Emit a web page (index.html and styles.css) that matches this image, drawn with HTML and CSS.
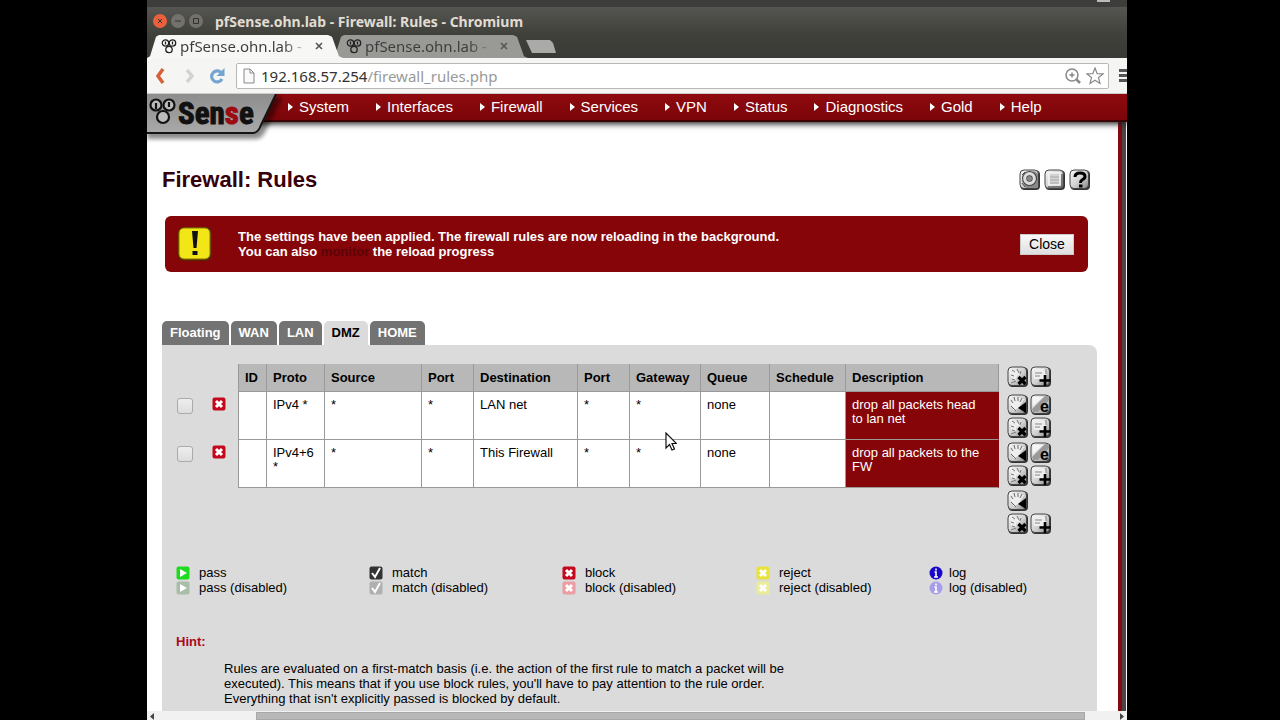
FILE: index.html
```
<!DOCTYPE html>
<html lang="en">
<head>
  <meta charset="UTF-8">
  <meta name="viewport" content="width=device-width, initial-scale=1.0">
  <title>pfSense.ohn.lab - Firewall: Rules</title>
  <link rel="stylesheet" href="styles.css">
</head>
<body>
<!-- Shared icons -->
<svg width="0" height="0" class="defs">
  <defs>
    <linearGradient id="metal" x1="0" y1="0" x2="1" y2="1">
      <stop offset="0" stop-color="#fafafa" />
      <stop offset="0.55" stop-color="#cfcfcf" />
      <stop offset="1" stop-color="#858585" />
    </linearGradient>
    <linearGradient id="logoFill" x1="0" y1="0" x2="0" y2="1">
      <stop offset="0" stop-color="#8d8d8d" />
      <stop offset="1" stop-color="#a9a9a9" />
    </linearGradient>
    <symbol id="base" viewBox="0 0 22 22">
      <rect x="1.5" y="1.5" width="19.500" height="19.500" rx="4" fill="#333" />
      <rect x="1" y="1" width="18.500" height="18.500" rx="4" fill="url(#metal)" stroke="#444" />
    </symbol>
    <symbol id="delete" viewBox="0 0 22 22">
      <use href="#base" />
      <path d="M3 5l5-1 6 3-4 3-2 5-4-3z" fill="#eee" />
      <path d="M5 4l3 2M10 3l2 4M14 5l-1 3M4 9l3 1M5 13l3 1M4 17l5-2" stroke="#777" fill="none" />
      <path d="M11.500 11l7 7M18.500 11l-7 7" stroke="#000" stroke-width="3.200" />
    </symbol>
    <symbol id="add" viewBox="0 0 22 22">
      <use href="#base" />
      <path d="M4 3h10l2 4v6H4z" fill="#eee" />
      <path d="M5 7h7M5 10h5M16 3v5" stroke="#888" fill="none" />
      <path d="M15 9v11M9.500 14.500h11" stroke="#000" stroke-width="2.600" />
    </symbol>
    <symbol id="move" viewBox="0 0 22 22">
      <use href="#base" />
      <path d="M3 8l4 9 5-4 5-8-8-2z" fill="#eee" />
      <path d="M4 6l2 3M7 3l1 4M11 3v4M15 4l-2 4M4 12l5 5" stroke="#666" fill="none" />
      <path d="M11 14l8-6v11z" fill="#000" />
    </symbol>
    <symbol id="edit" viewBox="0 0 22 22">
      <use href="#base" />
      <path d="M2 15L15 2h4v4L8 18H3z" fill="#999" />
      <path d="M3 3h10L3 12z" fill="#f5f5f5" />
      <text x="10" y="18" class="edit-letter">e</text>
    </symbol>
    <symbol id="block" viewBox="0 0 14 14">
      <rect x="0.500" y="0.500" width="13" height="13" rx="2" fill="currentColor" />
      <path d="M4 4l6 6M10 4l-6 6" stroke="#fff" stroke-width="3" />
    </symbol>
    <symbol id="pass" viewBox="0 0 14 14">
      <rect x="0.500" y="0.500" width="13" height="13" rx="2" fill="currentColor" />
      <path d="M4 3l7 4-7 4z" fill="#fff" />
    </symbol>
    <symbol id="match" viewBox="0 0 14 14">
      <rect x="0.500" y="0.500" width="13" height="13" rx="2" fill="currentColor" />
      <path d="M3 7l3 4 5-9" stroke="#fff" stroke-width="2" fill="none" />
    </symbol>
    <symbol id="log" viewBox="0 0 14 14">
      <circle cx="7" cy="7" r="6.500" fill="currentColor" />
      <path d="M7 2.500v2M5.500 6H7v5M5 11h4" stroke="#fff" stroke-width="1.600" fill="none" />
    </symbol>
    <symbol id="rings" viewBox="0 0 16 16">
      <circle cx="4.500" cy="5" r="3.200" />
      <circle cx="11.500" cy="5" r="3.200" />
      <circle cx="8" cy="11.500" r="3.200" />
      <path d="M4.500 3.500v3M11.500 3.500v3" />
    </symbol>
  </defs>
</svg>

<div class="desktop">
  <div class="panel-strip"></div>
  <header class="titlebar">
    <button class="win-btn win-close" aria-label="Close window"><svg viewBox="0 0 14 14"><path d="M5 5l4 4M9 5l-4 4" /></svg></button>
    <button class="win-btn" aria-label="Minimize"><svg viewBox="0 0 14 14"><path d="M4 7h6" /></svg></button>
    <button class="win-btn" aria-label="Maximize"><svg viewBox="0 0 14 14"><path d="M4.500 4.500h5v5h-5z" /></svg></button>
    <span class="win-title">pfSense.ohn.lab - Firewall: Rules - Chromium</span>
    <span class="tray"></span>
  </header>
  <div class="tabstrip">
    <div class="btab btab-active">
      <svg class="favicon"><use href="#rings" /></svg>
      <span class="btab-title">pfSense.ohn.lab -</span>
      <button class="btab-close" aria-label="Close tab"><svg viewBox="0 0 8 8"><path d="M1 1l6 6M7 1L1 7" /></svg></button>
    </div>
    <div class="btab">
      <svg class="favicon"><use href="#rings" /></svg>
      <span class="btab-title">pfSense.ohn.lab -</span>
      <button class="btab-close" aria-label="Close tab"><svg viewBox="0 0 8 8"><path d="M1 1l6 6M7 1L1 7" /></svg></button>
    </div>
    <button class="newtab" aria-label="New tab"></button>
  </div>
  <div class="toolbar">
    <button class="tool" aria-label="Back"><svg viewBox="0 0 18 18"><path d="M11 2L6 9l5 7" fill="none" stroke="#d4613a" stroke-width="3.500" /></svg></button>
    <button class="tool" aria-label="Forward"><svg viewBox="0 0 18 18"><path d="M7 3l5 6-5 6" fill="none" stroke="#d2d2d0" stroke-width="3.500" /></svg></button>
    <button class="tool" aria-label="Reload"><svg viewBox="0 0 18 18"><path d="M13 5.500A5.500 5.500 0 1 0 14 12" fill="none" stroke="#74a5d2" stroke-width="3.200" /><path d="M16.500 1v8h-8z" fill="#74a5d2" /></svg></button>
    <div class="address">
      <svg class="page-icon" viewBox="0 0 12 16"><path d="M1 1h6l4 4v10H1zM7 1v4h4" fill="#fafafa" stroke="#888" /></svg>
      <span class="url" role="textbox" aria-label="Address">192.168.57.254<span class="path">/firewall_rules.php</span></span>
      <svg class="addr-icon" viewBox="0 0 18 18"><g fill="none" stroke="#888" stroke-width="1.500"><circle cx="8" cy="8" r="6" /><path d="M8 5.500v5M5.500 8h5" /><path d="M12.500 12.500l3.500 3.500" stroke-width="2.500" /></g></svg>
      <svg class="addr-icon" viewBox="0 0 18 18"><path d="M9 1l2.200 5.600 6 .3-4.700 3.700L14 16.500 9 13.200l-5 3.300 1.500-5.900L.8 6.900l6-.3z" fill="#fff" stroke="#888" stroke-width="1.200" /></svg>
    </div>
    <button class="menu-btn" aria-label="Menu"></button>
  </div>

  <div class="viewport">
    <nav class="nav">
      <svg class="logo" viewBox="0 0 136 52">
        <path d="M0 3h136l-18 35q-3 7-9 7H0z" fill="#000" opacity="0.450" class="logo-shadow" />
        <path d="M0 0h129l-15 31q-3 8-8 8H0z" fill="url(#logoFill)" />
        <path d="M0 39h106q5 0 8-8L129 0" fill="none" stroke="#151515" stroke-width="2" />
        <g fill="#bbb" stroke="#111" stroke-width="2.200">
          <circle cx="9" cy="11" r="5.500" />
          <circle cx="22" cy="11" r="5.500" />
          <circle cx="16" cy="23" r="6" />
          <path d="M9 9v6M22 8v5" />
        </g>
        <text x="31" y="30" class="logo-text">Sen<tspan class="logo-s">s</tspan>e</text>
      </svg>
      <a href="#">System</a>
      <a href="#">Interfaces</a>
      <a href="#">Firewall</a>
      <a href="#">Services</a>
      <a href="#">VPN</a>
      <a href="#">Status</a>
      <a href="#">Diagnostics</a>
      <a href="#">Gold</a>
      <a href="#">Help</a>
    </nav>
    <main class="page">
      <div class="page-head">
        <h1>Firewall: Rules</h1>
        <div class="shortcuts">
          <a href="#" aria-label="Service control"><svg class="act" viewBox="0 0 22 22"><use href="#base" /><path d="M3 12l4 7h12V5l-4-3z" fill="#888" /><circle cx="10.500" cy="9.500" r="5" fill="none" stroke="#444" stroke-width="5" /><circle cx="10.500" cy="9.500" r="4.800" fill="none" stroke="#ddd" stroke-width="3.200" /><path d="M3 14l3 4M3 6l3-3" stroke="#444" /></svg></a>
          <a href="#" aria-label="Log"><svg class="act" viewBox="0 0 22 22"><use href="#base" /><path d="M5 4h11v12H5z" fill="#d2d2d2" stroke="#f5f5f5" stroke-width="1.500" /><path d="M6 8h9M6 11h9M6 14h9" stroke="#aaa" /><path d="M4 18h14V5" fill="none" stroke="#666" stroke-width="1.500" /></svg></a>
          <a href="#" aria-label="Help"><svg class="act" viewBox="0 0 22 22"><use href="#base" /><path d="M6 8q0-4 5-4t5 3.500q0 2-3 3.500-1.500 1-1.500 3" fill="none" stroke="#000" stroke-width="3" /><path d="M10 15.500h3.500v3H10z" /></svg></a>
        </div>
      </div>

      <div class="notice">
        <svg class="warn" viewBox="0 0 36 36">
          <rect x="1" y="1" width="34" height="34" rx="6" fill="#5a2400" />
          <rect x="2" y="2" width="31" height="31" rx="5" fill="#f2e616" stroke="#8a7a00" />
          <path d="M15 5h6l-1.500 17h-3zM15.500 25h5v4h-5z" fill="#111" />
        </svg>
        <p>The settings have been applied. The firewall rules are now reloading in the background.<br>You can also <a href="#">monitor</a> the reload progress</p>
        <button class="close">Close</button>
      </div>

      <div class="tabs">
        <a href="#">Floating</a>
        <a href="#">WAN</a>
        <a href="#">LAN</a>
        <a href="#" class="active">DMZ</a>
        <a href="#">HOME</a>
      </div>

      <section class="box">
        <table class="rules">
          <colgroup>
            <col class="c-check"><col class="c-icon"><col class="c-id"><col class="c-proto"><col class="c-source"><col class="c-port"><col class="c-dest"><col class="c-port"><col class="c-gw"><col class="c-queue"><col class="c-sched"><col><col class="c-act">
          </colgroup>
          <thead>
            <tr>
              <td></td><td></td>
              <th class="first">ID</th><th>Proto</th><th>Source</th><th>Port</th><th>Destination</th><th>Port</th><th>Gateway</th><th>Queue</th><th>Schedule</th><th>Description</th>
              <td class="actions"><div class="grid">
                <a href="#" aria-label="Delete selected"><svg class="act"><use href="#delete" /></svg></a>
                <a href="#" aria-label="Add rule"><svg class="act"><use href="#add" /></svg></a>
              </div></td>
            </tr>
          </thead>
          <tbody>
            <tr>
              <td class="sel"><input type="checkbox" aria-label="Select rule 1"></td>
              <td class="state"><svg class="ico i-block"><use href="#block" /></svg></td>
              <td class="cell first"></td><td class="cell">IPv4 *</td><td class="cell">*</td><td class="cell">*</td><td class="cell">LAN net</td><td class="cell">*</td><td class="cell">*</td><td class="cell">none</td><td class="cell"></td><td class="cell descr">drop all packets head to lan net</td>
              <td class="actions"><div class="grid">
                <a href="#" aria-label="Move"><svg class="act"><use href="#move" /></svg></a>
                <a href="#" aria-label="Edit"><svg class="act"><use href="#edit" /></svg></a>
                <a href="#" aria-label="Delete"><svg class="act"><use href="#delete" /></svg></a>
                <a href="#" aria-label="Add"><svg class="act"><use href="#add" /></svg></a>
              </div></td>
            </tr>
            <tr>
              <td class="sel"><input type="checkbox" aria-label="Select rule 2"></td>
              <td class="state"><svg class="ico i-block"><use href="#block" /></svg></td>
              <td class="cell first"></td><td class="cell">IPv4+6 *</td><td class="cell">*</td><td class="cell">*</td><td class="cell">This Firewall</td><td class="cell">*</td><td class="cell">*</td><td class="cell">none</td><td class="cell"></td><td class="cell descr">drop all packets to the FW</td>
              <td class="actions"><div class="grid">
                <a href="#" aria-label="Move"><svg class="act"><use href="#move" /></svg></a>
                <a href="#" aria-label="Edit"><svg class="act"><use href="#edit" /></svg></a>
                <a href="#" aria-label="Delete"><svg class="act"><use href="#delete" /></svg></a>
                <a href="#" aria-label="Add"><svg class="act"><use href="#add" /></svg></a>
              </div></td>
            </tr>
            <tr>
              <td colspan="12"></td>
              <td class="actions"><div class="grid">
                <a href="#" aria-label="Move to end"><svg class="act"><use href="#move" /></svg></a>
                <span></span>
                <a href="#" aria-label="Delete selected"><svg class="act"><use href="#delete" /></svg></a>
                <a href="#" aria-label="Add rule"><svg class="act"><use href="#add" /></svg></a>
              </div></td>
            </tr>
          </tbody>
        </table>

        <div class="legend">
          <span><svg class="ico i-pass"><use href="#pass" /></svg>pass</span>
          <span><svg class="ico i-match"><use href="#match" /></svg>match</span>
          <span><svg class="ico i-block"><use href="#block" /></svg>block</span>
          <span><svg class="ico i-reject"><use href="#block" /></svg>reject</span>
          <span class="tight"><svg class="ico i-log"><use href="#log" /></svg>log</span>
          <span><svg class="ico i-pass-off"><use href="#pass" /></svg>pass (disabled)</span>
          <span><svg class="ico i-match-off"><use href="#match" /></svg>match (disabled)</span>
          <span><svg class="ico i-block-off"><use href="#block" /></svg>block (disabled)</span>
          <span><svg class="ico i-reject-off"><use href="#block" /></svg>reject (disabled)</span>
          <span class="tight"><svg class="ico i-log-off"><use href="#log" /></svg>log (disabled)</span>
        </div>

        <h2>Hint:</h2>
        <p class="hint">Rules are evaluated on a first-match basis (i.e. the action of the first rule to match a packet will be executed). This means that if you use block rules, you'll have to pay attention to the rule order. Everything that isn't explicitly passed is blocked by default.</p>
      </section>
    </main>
  </div>

  <div class="hscroll">
    <svg viewBox="0 0 9 9"><path d="M7 2v7L3 5.500z" /></svg>
    <div class="track"><div class="thumb"></div></div>
    <svg viewBox="0 0 9 9"><path d="M2 2v7l4-3.500z" /></svg>
  </div>
</div>

<svg class="cursor" viewBox="0 0 12 20"><path d="M1 1v15l3.500-3.500L7 18l2.500-1-2.500-5.500h4.500z" fill="#fff" stroke="#111" stroke-width="1.200" /></svg>
</body>
</html>
```
FILE: styles.css
```
* { box-sizing: border-box; }
body {
  margin: 0;
  background: #000;
  font-family: "Liberation Sans", Arial, sans-serif;
  font-size: 13px;
  overflow: hidden;
}
button { border: 0; padding: 0; background: none; }
a { color: inherit; text-decoration: none; }
svg { display: block; flex: none; }
.defs { position: absolute; }
.desktop {
  display: flex;
  flex-direction: column;
  height: 100vh;
  margin: 0 153px 0 147px;
  overflow: hidden;
}

/* Browser window */
.panel-strip { height: 7px; flex: none; background: #3d3d3b; }
.titlebar {
  position: relative;
  display: flex;
  align-items: center;
  gap: 4px;
  height: 28px;
  flex: none;
  padding-left: 6px;
  background: linear-gradient(#555551, #40403b);
}
.win-btn {
  width: 14px;
  height: 14px;
  border-radius: 50%;
  background: #72716c;
}
.win-btn path { fill: none; stroke: #33322f; }
.win-close { background: #ea5f3c; }
.win-title {
  margin-left: 8px;
  color: #e0dcd2;
  font: bold 14px "Noto Sans", sans-serif;
  white-space: nowrap;
}
/* bottom edge of the tray icon above the window */
.tray {
  position: absolute;
  top: -7px;
  right: 17px;
  width: 13px;
  height: 2px;
  background: #bbb;
}
.tabstrip {
  display: flex;
  align-items: flex-end;
  height: 23px;
  flex: none;
  background: linear-gradient(#40403b, #393935);
}
.btab {
  display: flex;
  align-items: center;
  width: 196px;
  height: 23px;
  padding: 0 14px 2px;
  background: #999996;
  clip-path: polygon(0 100%, 3px 92%, 9px 8%, 12px 0, 181px 0, 185px 8%, 192px 92%, 100% 100%);
}
.btab-active { background: #f7f7f5; z-index: 1; }
.btab + .btab { margin-left: -11px; }
.favicon {
  width: 16px;
  height: 16px;
  fill: none;
  stroke: #222;
  stroke-width: 1.3;
}
.btab-title {
  flex: 1;
  margin-left: 3px;
  font: 15px "Noto Sans", sans-serif;
  white-space: nowrap;
  overflow: hidden;
  color: transparent;
  background: linear-gradient(90deg, #3c3c3c 80%, #4440);
  background-clip: text;
}
.btab-close { margin: 0 6px; }
.btab-close svg { width: 8px; height: 8px; stroke: #555; stroke-width: 1.6; }
.newtab {
  width: 30px;
  height: 13px;
  margin: 0 0 5px -2px;
  background: #aaaaa8;
  clip-path: polygon(0 0, 24px 0, 27px 3px, 100% 100%, 6px 100%);
}
.toolbar {
  display: flex;
  align-items: center;
  gap: 10px;
  height: 36px;
  flex: none;
  padding-left: 5px;
  background: #f5f5f3;
  border-bottom: 1px solid #ccc;
}
.tool svg { width: 18px; height: 18px; }
.address {
  display: flex;
  align-items: center;
  flex: 1;
  gap: 4px;
  height: 26px;
  padding: 0 4px 0 6px;
  background: #fff;
  border: 1px solid #b8b8b6;
  border-radius: 2px;
}
.page-icon { width: 12px; height: 16px; }
.url {
  flex: 1;
  margin-left: 2px;
  color: #333;
  font: 15px "Noto Sans", sans-serif;
}
.path { color: #999; }
.addr-icon { width: 18px; height: 18px; }
.menu-btn {
  width: 8px;
  height: 13px;
  background: repeating-linear-gradient(#555 0 3px, transparent 3px 5px);
}

/* Page */
.viewport {
  display: flex;
  flex-direction: column;
  flex: 1;
  min-height: 0;
  overflow: hidden;
  background: #fff;
}
.nav {
  position: relative;
  z-index: 1;
  display: flex;
  gap: 27px;
  height: 28px;
  flex: none;
  padding-left: 141px;
  background: linear-gradient(#8f0a0e, #7a0509);
  border-bottom: 2px solid #3c0305;
  box-shadow: 0 2px 6px #222;
  color: #fff;
  font-size: 15px;
  line-height: 26px;
}
.nav a { display: flex; align-items: center; gap: 6px; }
.nav a::before {
  content: "";
  border: 4px solid transparent;
  border-left: 5px solid #fff;
  border-right: 0;
}
.logo {
  position: absolute;
  left: 0;
  top: 0;
  width: 136px;
  height: 52px;
}
.logo-shadow { filter: blur(2px); }
.logo-text {
  font: bold 31px "Roboto Condensed", Roboto, sans-serif;
  fill: #111;
  stroke: #111;
}
.logo-s { fill: #9c0a12; stroke: #9c0a12; }
.page {
  flex: 1;
  min-height: 0;
  margin-right: 1px;
  padding: 44px 25px 0 15px;
  border-right: 4px solid #4a4444;
  box-shadow: inset -4px 0 #850814;
}
.page-head {
  display: flex;
  justify-content: space-between;
  align-items: center;
  height: 28px;
  padding-right: 6px;
}
h1 { margin: 0; font-size: 22px; color: #35000a; }
.shortcuts { display: flex; gap: 3px; }
.act { width: 22px; height: 22px; }
.notice {
  display: flex;
  align-items: center;
  height: 56px;
  margin: 22px 9px 0 3px;
  padding: 0 14px 0 12px;
  background: #850509;
  border-radius: 6px;
  color: #fff;
}
.warn { width: 36px; height: 36px; }
.notice p {
  flex: 1;
  margin: 0 0 0 25px;
  font-weight: bold;
  line-height: 15px;
}
.notice a { color: #5c0408; }
.close {
  width: 54px;
  height: 21px;
  background: linear-gradient(#fafafa, #dedede);
  border: 1px solid #ccc;
  font: 14px "Liberation Sans", sans-serif;
}
.tabs { display: flex; gap: 2px; margin-top: 49px; }
.tabs a {
  height: 24px;
  padding: 0 8px;
  border-radius: 5px 5px 0 0;
  background: #737373;
  color: #fff;
  font-weight: bold;
  line-height: 24px;
}
.tabs .active { background: #dbdbdb; color: #000; }
.box {
  height: 480px;
  padding: 19px 42px 0 14px;
  background: #dbdbdb;
  border-radius: 0 8px 0 0;
}
.rules {
  width: 100%;
  table-layout: fixed;
  border-spacing: 0;
  line-height: 14px;
}
.rules td, .rules th { padding: 0; text-align: left; vertical-align: top; }
.c-check { width: 34px; }
.c-icon { width: 28px; }
.c-id { width: 29px; }
.c-proto { width: 58px; }
.c-source { width: 97px; }
.c-port { width: 52px; }
.c-dest { width: 104px; }
.c-gw { width: 71px; }
.c-queue { width: 69px; }
.c-sched { width: 76px; }
.c-act { width: 56px; }
.rules th, .rules .cell {
  padding: 6px;
  border-right: 1px solid #999;
  border-bottom: 1px solid #999;
}
.rules th { padding-top: 7px; background: #b8b8b8; height: 28px; }
.rules .first { border-left: 1px solid #999; }
.rules .cell { height: 48px; background: #fff; }
.rules .descr {
  padding-right: 12px;
  background: #850509;
  color: #fff;
  border-right-color: #850509;
}
.rules .sel { padding: 6px 0 0 1px; }
.rules .state { padding: 5px 0 0 2px; }
input[type="checkbox"] {
  appearance: none;
  display: block;
  width: 16px;
  height: 16px;
  margin: 0;
  border: 1px solid #aaa;
  border-radius: 3px;
  background: linear-gradient(#eee, #ddd);
}
.rules .actions { padding: 2px 0 0 8px; }
.grid { display: grid; grid-template-columns: 22px 22px; gap: 1px; }
.edit-letter { font: bold 16px "Liberation Sans", sans-serif; }
.ico { width: 14px; height: 14px; }
.i-pass { color: #1fdb1f; }
.i-match { color: #333; }
.i-block { color: #c4091f; }
.i-reject { color: #e8e23a; }
.i-log { color: #1708c8; }
.i-pass-off { color: #a9bda9; }
.i-match-off { color: #b0b0b0; }
.i-block-off { color: #eb9ca4; }
.i-reject-off { color: #eaec9c; }
.i-log-off { color: #a79de8; }
.legend {
  display: grid;
  grid-template-columns: 193px 193px 194px 173px 1fr;
  margin: 30px -42px 0 0;
  line-height: 15px;
}
.legend span { display: flex; align-items: center; gap: 9px; white-space: nowrap; }
.legend .tight { gap: 6px; }
h2 { margin: 39px 0 0; font-size: 13px; line-height: 15px; color: #a80a1c; }
.hint { max-width: 620px; margin: 12px 0 0; padding-left: 48px; line-height: 15px; }

.hscroll {
  display: flex;
  height: 9px;
  flex: none;
  background: #f1f1f1;
}
.hscroll svg { width: 9px; height: 9px; fill: #444; }
.track { flex: 1; padding: 1px 33px 0 100px; }
.thumb { height: 8px; background: #b8b8b8; border: 1px solid #a8a8a8; }
.cursor {
  position: absolute;
  left: 665px;
  top: 432px;
  width: 12px;
  height: 20px;
}
```
